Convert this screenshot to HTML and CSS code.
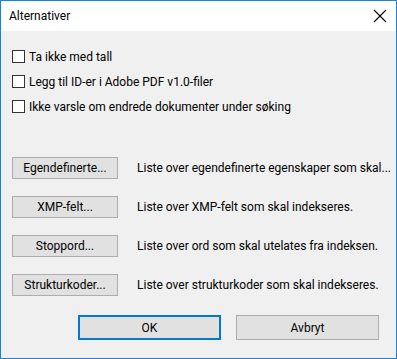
FILE: index.html
```html
<!DOCTYPE html>
<html lang="no">
<head>
    <meta charset="UTF-8">
    <title>Alternativer</title>
    <link rel="stylesheet" href="styles.css">
</head>
<body>
    <div class="window">
        <div class="titlebar">
            <span class="title">Alternativer</span>
            <svg class="close" width="14" height="14" viewBox="0 0 14 14">
                <path d="M1 1 L13 13 M13 1 L1 13" stroke="#000" stroke-width="1.1" fill="none"/>
            </svg>
        </div>
        <div class="content">
            <div class="checks">
                <label class="check"><span class="box"></span>Ta ikke med tall</label>
                <label class="check"><span class="box"></span>Legg til ID-er i Adobe PDF v1.0-filer</label>
                <label class="check"><span class="box"></span>Ikke varsle om endrede dokumenter under søking</label>
            </div>
            <div class="lists">
                <div class="list-row">
                    <button class="btn">Egendefinerte...</button>
                    <span class="desc">Liste over egendefinerte egenskaper som skal...</span>
                </div>
                <div class="list-row">
                    <button class="btn">XMP-felt...</button>
                    <span class="desc">Liste over XMP-felt som skal indekseres.</span>
                </div>
                <div class="list-row">
                    <button class="btn">Stoppord...</button>
                    <span class="desc">Liste over ord som skal utelates fra indeksen.</span>
                </div>
                <div class="list-row">
                    <button class="btn">Strukturkoder...</button>
                    <span class="desc">Liste over strukturkoder som skal indekseres.</span>
                </div>
            </div>
            <div class="actions">
                <button class="btn wide default">OK</button>
                <button class="btn wide">Avbryt</button>
            </div>
        </div>
    </div>
</body>
</html>
```

FILE: styles.css
```css
* {
    box-sizing: border-box;
}

body {
    margin: 0;
    font-family: Roboto, "Noto Sans", sans-serif;
    font-size: 12px;
    color: #000;
    background: #f0f0f0;
}

.window {
    width: 397px;
    height: 359px;
    border: 1px solid #1883d7;
    background: #f0f0f0;
    display: flex;
    flex-direction: column;
}

.titlebar {
    height: 30px;
    background: #fff;
    display: flex;
    align-items: center;
    justify-content: space-between;
    padding: 0 9px 0 8px;
}

.title {
    font-size: 12px;
}

.content {
    flex: 1;
    padding: 13px 0 0 11px;
    display: flex;
    flex-direction: column;
}

.checks {
    display: flex;
    flex-direction: column;
}

.check {
    height: 25px;
    display: flex;
    align-items: center;
    gap: 4px;
}

.box {
    flex: none;
    width: 13px;
    height: 13px;
    border: 1px solid #333;
    background: #fff;
}

.lists {
    margin-top: 38px;
    display: flex;
    flex-direction: column;
    gap: 17px;
}

.list-row {
    display: flex;
    align-items: center;
    gap: 19px;
}

.btn {
    flex: none;
    width: 106px;
    height: 22px;
    padding: 0;
    font: inherit;
    color: #000;
    background: #e1e1e1;
    border: 1px solid #adadad;
}

.desc {
    white-space: nowrap;
}

.actions {
    margin-top: 19px;
    padding-left: 66px;
    display: flex;
    gap: 15px;
}

.btn.wide {
    width: 143px;
    height: 25px;
}

.btn.default {
    border: 2px solid #0078d7;
}
```
